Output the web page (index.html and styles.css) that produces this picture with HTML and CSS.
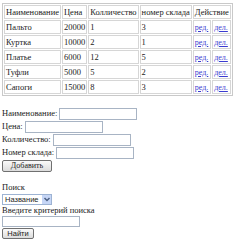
FILE: index.html
```html
<!DOCTYPE html>
<html lang="ru">
<head>
    <meta charset="UTF-8">
    <title>Склад</title>
    <link rel="stylesheet" href="styles.css">
</head>
<body>

    <!-- Список товаров -->
    <table class="goods">
        <tr>
            <th>Наименование</th>
            <th>Цена</th>
            <th>Колличество</th>
            <th>номер склада</th>
            <th colspan="2">Действие</th>
        </tr>
        <tr>
            <td>Пальто</td><td>20000</td><td>1</td><td>3</td>
            <td class="act"><a href="#">ред.</a></td><td class="act"><a href="#">дел.</a></td>
        </tr>
        <tr>
            <td>Куртка</td><td>10000</td><td>2</td><td>1</td>
            <td class="act"><a href="#">ред.</a></td><td class="act"><a href="#">дел.</a></td>
        </tr>
        <tr>
            <td>Платье</td><td>6000</td><td>12</td><td>5</td>
            <td class="act"><a href="#">ред.</a></td><td class="act"><a href="#">дел.</a></td>
        </tr>
        <tr>
            <td>Туфли</td><td>5000</td><td>5</td><td>2</td>
            <td class="act"><a href="#">ред.</a></td><td class="act"><a href="#">дел.</a></td>
        </tr>
        <tr>
            <td>Сапоги</td><td>15000</td><td>8</td><td>3</td>
            <td class="act"><a href="#">ред.</a></td><td class="act"><a href="#">дел.</a></td>
        </tr>
    </table>

    <!-- Добавление товара -->
    <form class="add-form">
        Наименование: <input type="text" class="field"><br>
        Цена: <input type="text" class="field"><br>
        Колличество: <input type="text" class="field"><br>
        Номер склада: <input type="text" class="field"><br>
        <button type="button" class="btn">Добавить</button>
    </form>

    <!-- Поиск -->
    <form class="search-form">
        Поиск<br>
        <span class="select">
            <span class="select-value">Название</span>
            <span class="select-arrow">
                <svg width="8" height="8" viewBox="0 0 8 8"><path d="M1.5 3 L4 5.5 L6.5 3" fill="none" stroke="#4d6185" stroke-width="1.5"/></svg>
            </span>
        </span><br>
        Введите критерий поиска<br>
        <input type="text" class="field field-search"><br>
        <button type="button" class="btn btn-sans">Найти</button>
    </form>

</body>
</html>
```

FILE: styles.css
```css
body {
    margin: 3px 2px;
    font-family: "Liberation Serif", serif;
    font-size: 8.5px;
    line-height: 11px;
    color: #222;
    background: #fff;
}

/* Таблица товаров */
.goods {
    border: 1px solid #c9c9c9;
    border-spacing: 1px;
}

.goods th,
.goods td {
    border: 1px solid #d6d6d6;
    padding: 1px 1px 0;
    font-weight: normal;
    text-align: left;
    white-space: nowrap;
}

.goods a {
    color: #3b3bd0;
    font-size: 8px;
}

/* Формы */
.add-form {
    margin-top: 11px;
    line-height: 13px;
}

.search-form {
    margin-top: 10px;
    line-height: 11px;
}

.field {
    width: 78px;
    height: 12px;
    box-sizing: border-box;
    border: 1px solid #a8b4c4;
    padding: 0;
    margin: 0;
    vertical-align: middle;
}

.field-search {
    height: 11px;
}

.btn {
    width: 50px;
    height: 12px;
    padding: 0;
    font-family: "Liberation Serif", serif;
    font-size: 8px;
    line-height: 10px;
    color: #222;
    border: 1px solid #707070;
    border-radius: 2px;
    background: linear-gradient(#fafafa, #dcdcdc);
}

.btn-sans {
    width: 32px;
    height: 11px;
    margin-top: 1px;
    font-family: "Liberation Sans", sans-serif;
    font-size: 7.5px;
}

/* Выпадающий список */
.select {
    display: inline-flex;
    align-items: center;
    width: 50px;
    height: 11px;
    box-sizing: border-box;
    border: 1px solid #9db3d3;
    font-family: "Liberation Sans", sans-serif;
    font-size: 7.5px;
    vertical-align: middle;
}

.select-value {
    flex: 1;
    padding-left: 2px;
}

.select-arrow {
    display: flex;
    align-items: center;
    justify-content: center;
    width: 9px;
    height: 9px;
    background: #c6d6f6;
}
```
